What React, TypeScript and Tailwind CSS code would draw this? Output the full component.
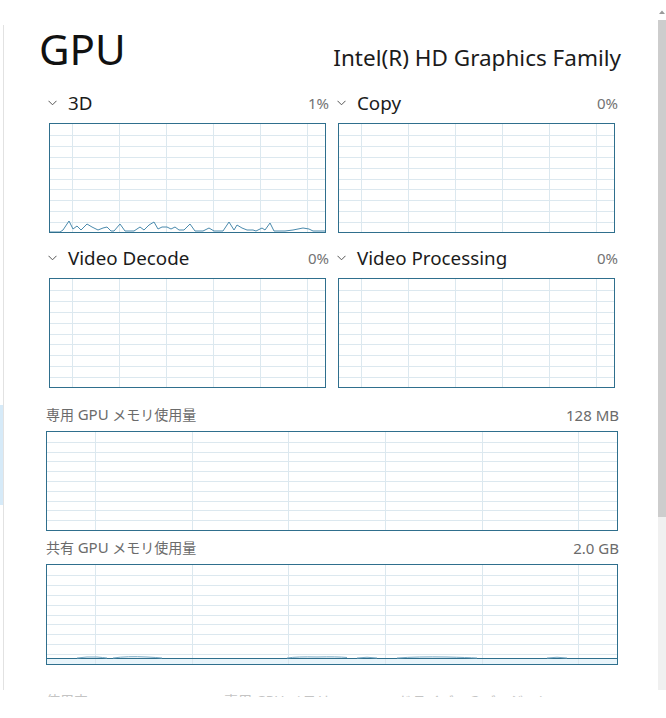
import React from "react";

const FONT = "font-['Noto_Sans','Noto_Sans_CJK_JP',sans-serif]";

function Chevron() {
  return (
    <svg width="9" height="6" viewBox="0 0 9 6" className="shrink-0">
      <polyline points="0.5,0.8 4.5,4.8 8.5,0.8" fill="none" stroke="#555" strokeWidth="1" />
    </svg>
  );
}

type SmallProps = { line?: string };

function SmallChart({ line }: SmallProps) {
  const w = 275;
  const h = 108;
  const vx = [22, 69, 116, 163, 210, 257];
  const hy = Array.from({ length: 9 }, (_, i) => Math.round((i + 1) * 10.9) + 0.5);
  return (
    <div className="ml-[1px] w-[277px] h-[110px] border border-[#2f6f8d] bg-white">
      <svg width={w} height={h} className="block">
        {hy.map((y) => (
          <line key={"h" + y} x1={0} x2={w} y1={y} y2={y} stroke="#dce8ef" strokeWidth="1" />
        ))}
        {vx.map((x) => (
          <line key={"v" + x} x1={x + 0.5} x2={x + 0.5} y1={0} y2={h} stroke="#dce8ef" strokeWidth="1" />
        ))}
        {line && <polyline points={line} fill="none" stroke="#4a8aad" strokeWidth="1" />}
      </svg>
    </div>
  );
}

function BigChart({ height, shared }: { height: number; shared?: boolean }) {
  const w = 570;
  const h = height - 2;
  const vx = [48, 145, 241, 338, 435, 531];
  const hy = Array.from({ length: 9 }, (_, i) => Math.round(((i + 1) * h) / 10) + 0.5);
  return (
    <div className="w-[572px] border border-[#2f6f8d] bg-white" style={{ height }}>
      <svg width={w} height={h} className="block">
        {shared && <rect x={0} y={93} width={w} height={h - 93} fill="#e9f5fb" />}
        {hy.map((y) => (
          <line key={"h" + y} x1={0} x2={w} y1={y} y2={y} stroke="#dce8ef" strokeWidth="1" />
        ))}
        {vx.map((x) => (
          <line key={"v" + x} x1={x + 0.5} x2={x + 0.5} y1={0} y2={h} stroke="#dce8ef" strokeWidth="1" />
        ))}
        {shared && (
          <>
            <line x1={0} x2={w} y1={93.5} y2={93.5} stroke="#2f6f8d" strokeWidth="1" />
            <path
              d="M30 93 Q40 91.5 50 92 Q56 92.5 60 93 M66 93 Q80 91 100 92 Q110 92.5 115 93 M240 93 Q250 91.5 270 92 Q290 91.5 300 92.5 M310 93 Q320 91.5 330 93 M350 93 Q370 91.5 400 92 Q420 92.5 430 93 M500 93 Q510 91.5 520 93"
              fill="none"
              stroke="#7aaac4"
              strokeWidth="1"
            />
          </>
        )}
      </svg>
    </div>
  );
}

function Panel({ name, pct, line }: { name: string; pct: string; line?: string }) {
  return (
    <div className="w-[281px] flex flex-col">
      <div className="h-[30px] flex items-end justify-between pb-[3px]">
        <div className="flex items-center gap-[11px]">
          <Chevron />
          <span className="text-[18.8px] leading-[24px] text-[#1b1b1b]">{name}</span>
        </div>
        <span className="text-[15px] leading-[24px] text-[#737373]">{pct}</span>
      </div>
      <div className="mt-[5px]">
        <SmallChart line={line} />
      </div>
    </div>
  );
}

function MemLabel({ a, b }: { a: string; b: string }) {
  return (
    <div className="h-[28px] flex items-end justify-between">
      <span className="text-[14px] leading-[22px] text-[#6b6b6b]">
        {a} <span className="text-[15px]">GPU</span> メモリ使用量
      </span>
      <span className="text-[15px] leading-[22px] text-[#6b6b6b] mr-[-1px]">{b}</span>
    </div>
  );
}

const LINE_3D =
  "0,108 10,108 13,106 19,97 23,105 27,102 31,106 37,100 42,103 48,106 53,104 57,103 61,107 64,107 70,100 75,107 84,107 90,103 94,106 99,101 104,98 108,105 112,103 117,103 121,105 125,103 129,106 134,106 140,100 145,107 153,107 159,104 164,107 173,107 179,98 184,106 187,101 192,104 197,106 203,106 206,107 212,104 215,106 220,99 224,107 235,107 243,106 253,104 259,105 263,107 275,107";

export default function App() {
  return (
    <div className={`w-[666px] h-[718px] bg-white flex overflow-hidden ${FONT}`}>
      <div className="w-[3px] flex flex-col shrink-0">
        <div className="h-[405px]" />
        <div className="h-[100px] bg-[#d6eaf8]" />
      </div>
      <div className="w-[1px] shrink-0 mt-[25px] h-[665px] bg-[#e2e2e2]" />
      <div className="flex-1 flex flex-col">
        <div className="h-[88px] flex items-end justify-between pl-[35px] pr-[37px] pb-[16px]">
          <span className="text-[42px] leading-[58px] mb-[-6px] text-[#111]">GPU</span>
          <span className="text-[22.5px] leading-[28px] text-[#1b1b1b]">Intel(R) HD Graphics Family</span>
        </div>
        <div className="pl-[44px] flex flex-col">
          <div className="flex gap-[8px]">
            <Panel name="3D" pct="1%" line={LINE_3D} />
            <Panel name="Copy" pct="0%" />
          </div>
          <div className="flex gap-[8px] mt-[10px]">
            <Panel name="Video Decode" pct="0%" />
            <Panel name="Video Processing" pct="0%" />
          </div>
        </div>
        <div className="pl-[42px] w-[614px] flex flex-col">
          <div className="mt-[10px]">
            <MemLabel a="専用" b="128 MB" />
          </div>
          <div className="mt-[5px]">
            <BigChart height={100} />
          </div>
          <MemLabel a="共有" b="2.0 GB" />
          <div className="mt-[5px]">
            <BigChart height={101} shared />
          </div>
          <div className="mt-[26px] h-[6px] overflow-hidden flex text-[14px] leading-[20px] text-[#c4c4c4]">
            <span className="w-[178px]">使用率</span>
            <span className="w-[174px]">専用 GPU メモリ</span>
            <span>ドライバーのバージョン:</span>
          </div>
        </div>
      </div>
      <div className="w-[8px] shrink-0 flex flex-col pt-[10px]">
        <div className="h-[10px] flex justify-center">
          <svg width="6" height="4" viewBox="0 0 6 4">
            <polygon points="0,4 3,0.5 6,4" fill="#9a9a9a" />
          </svg>
        </div>
        <div className="h-[497px] bg-[#cdcdcd]" />
        <div className="h-[173px] bg-[#f0f0f0]" />
      </div>
    </div>
  );
}
